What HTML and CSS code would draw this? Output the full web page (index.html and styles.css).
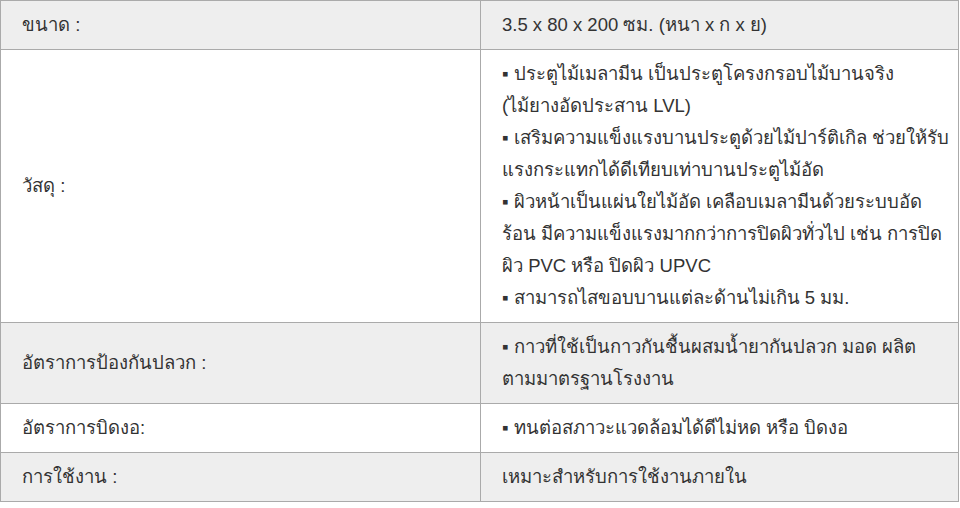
FILE: index.html
```html
<!DOCTYPE html>
<html lang="th">
<head>
<meta charset="utf-8">
<link rel="stylesheet" href="styles.css">
</head>
<body>
<table class="spec">
  <tbody>
    <tr class="odd">
      <td class="label">ขนาด :</td>
      <td class="value">3.5 x 80 x 200 ซม. (หนา x ก x ย)</td>
    </tr>
    <tr class="even">
      <td class="label">วัสดุ :</td>
      <td class="value">▪ ประตูไม้เมลามีน เป็นประตูโครงกรอบไม้บานจริง<br>(ไม้ยางอัดประสาน LVL)<br>▪ เสริมความแข็งแรงบานประตูด้วยไม้ปาร์ติเกิล ช่วยให้รับ<br>แรงกระแทกได้ดีเทียบเท่าบานประตูไม้อัด<br>▪ ผิวหน้าเป็นแผ่นใยไม้อัด เคลือบเมลามีนด้วยระบบอัด<br>ร้อน มีความแข็งแรงมากกว่าการปิดผิวทั่วไป เช่น การปิด<br>ผิว PVC หรือ ปิดผิว UPVC<br>▪ สามารถไสขอบบานแต่ละด้านไม่เกิน 5 มม.</td>
    </tr>
    <tr class="odd">
      <td class="label">อัตราการป้องกันปลวก :</td>
      <td class="value">▪ กาวที่ใช้เป็นกาวกันชื้นผสมน้ำยากันปลวก มอด ผลิต<br>ตามมาตรฐานโรงงาน</td>
    </tr>
    <tr class="even">
      <td class="label">อัตราการบิดงอ:</td>
      <td class="value">▪ ทนต่อสภาวะแวดล้อมได้ดีไม่หด หรือ บิดงอ</td>
    </tr>
    <tr class="odd">
      <td class="label">การใช้งาน :</td>
      <td class="value">เหมาะสำหรับการใช้งานภายใน</td>
    </tr>
  </tbody>
</table>
</body>
</html>
```
FILE: styles.css
```css
html, body {
  margin: 0;
  padding: 0;
  background: #fff;
}
body {
  font-family: "Liberation Sans", Arial, sans-serif;
  font-size: 18.5px;
  color: #333;
}
.spec {
  width: 959px;
  border-collapse: collapse;
  table-layout: fixed;
}
.spec td {
  border: 1px solid #aaa;
  padding: 8px 21px;
  line-height: 32px;
  vertical-align: middle;
  text-align: left;
}
.spec .label {
  width: 437px;
}
.spec .value {
  white-space: nowrap;
}
.odd td {
  background: #eee;
}
.even td {
  background: #fff;
}
```
